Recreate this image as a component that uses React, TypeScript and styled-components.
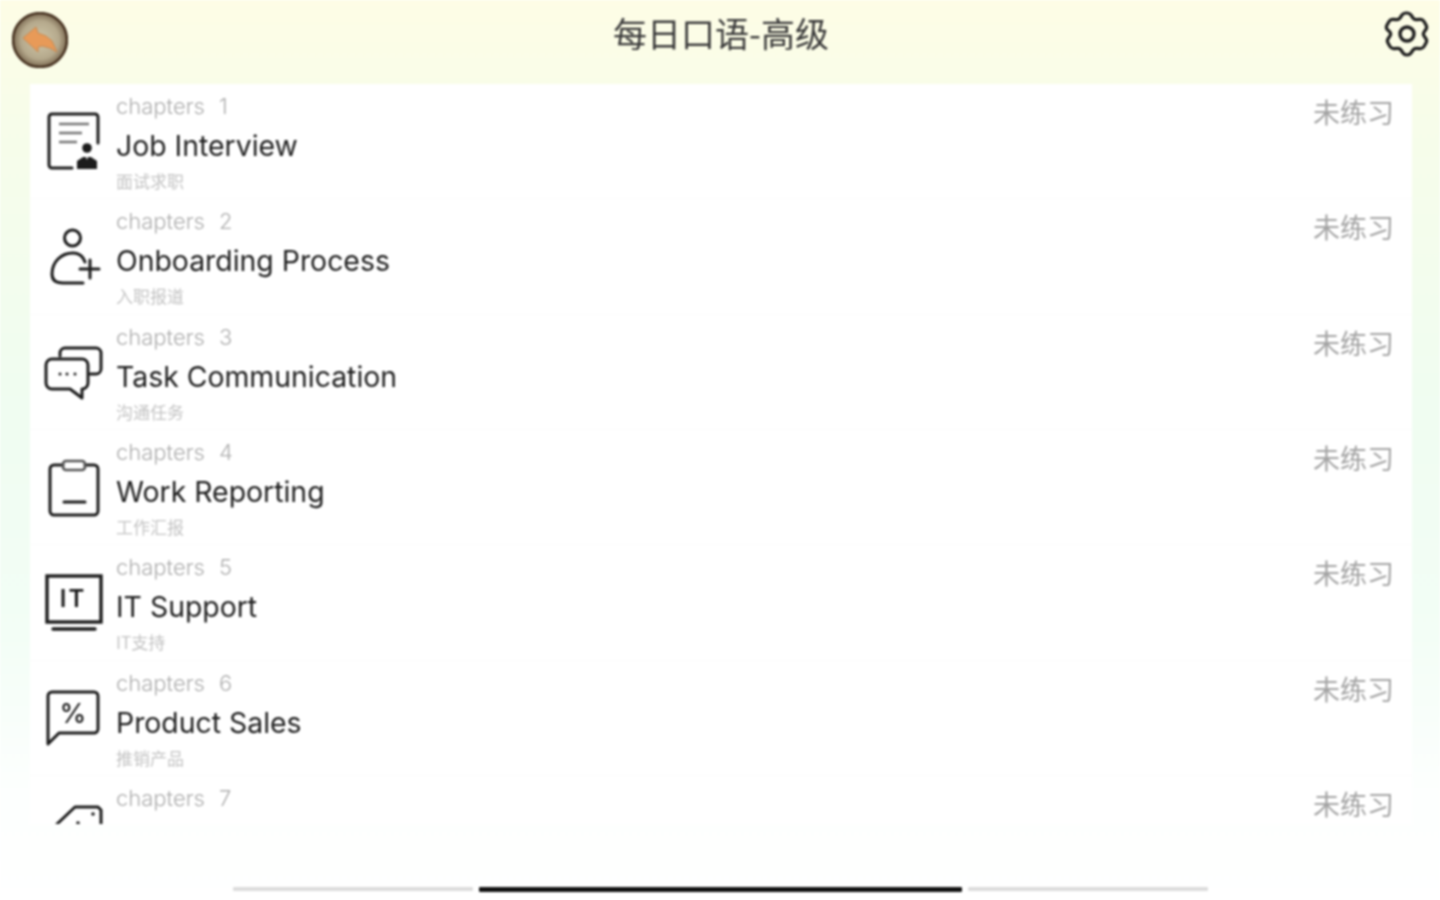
import React from "react";
import styled, { createGlobalStyle } from "styled-components";

const GlobalStyle = createGlobalStyle`
  html, body {
    margin: 0;
    padding: 0;
    height: 100%;
  }
  body {
    font-family: "Inter", "Noto Sans CJK SC", sans-serif;
    background: #fff;
  }
`;

const CJK = `"Noto Sans CJK SC", sans-serif`;

const Page = styled.div`
  width: 1440px;
  height: 900px;
  overflow: hidden;
  display: flex;
  flex-direction: column;
  background: linear-gradient(180deg, #fefde6 0%, #f7fdea 14%, #f0fdf1 45%, #f3fef6 70%, #fdfffe 88%, #ffffff 100%);
  filter: blur(0.8px);
`;

const Header = styled.header`
  height: 84px;
  flex: none;
  display: grid;
  grid-template-columns: 1fr auto 1fr;
  padding: 0 10px 0 12px;
`;

const BackButton = styled.button`
  width: 56px;
  height: 56px;
  margin-top: 12px;
  padding: 0;
  border: none;
  background: none;
  justify-self: start;
`;

const Title = styled.h1`
  margin: 0;
  font: 400 34px/66px ${CJK};
  color: #3a3a3a;
`;

const GearButton = styled.button`
  width: 46px;
  height: 46px;
  margin-top: 11px;
  padding: 0;
  border: none;
  background: none;
  justify-self: end;
`;

const List = styled.main`
  width: 1382px;
  height: 740px;
  flex: none;
  margin-left: 30px;
  overflow: hidden;
  background: #fff;
  display: grid;
  grid-auto-rows: 115.33px;
`;

const Row = styled.section`
  display: flex;
  align-items: flex-start;
  padding: 0 18px 0 14px;
  border-bottom: 1px solid #fcfcfc;
  box-sizing: border-box;
`;

const IconBox = styled.div`
  width: 60px;
  height: 60px;
  margin-top: 28px;
  flex: none;
`;

const Info = styled.div`
  flex: 1;
  margin-left: 12px;
  display: flex;
  flex-direction: column;
`;

const Chapter = styled.div`
  display: flex;
  gap: 14px;
  height: 45px;
  font-size: 22px;
  line-height: 45px;
  font-weight: 300;
  color: #aeaeae;
`;

const Name = styled.div`
  height: 32px;
  margin-top: 1px;
  font-size: 28.4px;
  line-height: 32px;
  color: #1e1e1e;
`;

const Sub = styled.div`
  margin-top: 7px;
  font: 400 17px/24px ${CJK};
  color: #c4c4c4;
`;

const Status = styled.div`
  margin-top: 9px;
  font: 400 27px/38px ${CJK};
  color: #a4a4a4;
`;

const Pager = styled.nav`
  margin-top: 63px;
  display: flex;
  justify-content: center;
  gap: 6px;
`;

const Segment = styled.span<{ $width: number; $active?: boolean }>`
  width: ${(p) => p.$width}px;
  height: ${(p) => (p.$active ? 5 : 4)}px;
  background: ${(p) => (p.$active ? "#111" : "#dcdcdc")};
  border-radius: 1px;
`;

const Line = ({ d, w = 3 }: { d: string; w?: number }) => (
  <path d={d} fill="none" stroke="#1c1c1c" strokeWidth={w} strokeLinecap="round" strokeLinejoin="round" />
);

const icons = [
  <>
    <Line d="M28 56H8a3 3 0 0 1-3-3V5a3 3 0 0 1 3-3h43a3 3 0 0 1 3 3v26" />
    <path d="M15 12h30M15 21h23M15 30h18" fill="none" stroke="#777" strokeWidth="2.4" />
    <circle cx="43" cy="36" r="4.8" fill="#1c1c1c" />
    <path d="M33 57v-8l6-4h3l1 3 1-3h3l6 4v8z" fill="#1c1c1c" />
  </>,
  <>
    <circle cx="28.500" cy="11" r="8" fill="none" stroke="#1c1c1c" strokeWidth="3" />
    <Line d="M41 35c-2-6-6-9-12-9-12 0-21 9-21 21 0 6 4 9 11 9h20" />
    <Line d="M36 42h19M46 33v18" />
  </>,
  <>
    <Line d="M8 16h30a6 6 0 0 1 6 6v18a6 6 0 0 1-6 6v9l-12-9H8a6 6 0 0 1-6-6V22a6 6 0 0 1 6-6z" />
    <Line d="M16 13V10a5 5 0 0 1 5-5h31a5 5 0 0 1 5 5v16a5 5 0 0 1-5 5h-6" />
    <circle cx="16" cy="31" r="1.500" fill="#1c1c1c" />
    <circle cx="23" cy="31" r="1.500" fill="#1c1c1c" />
    <circle cx="31" cy="31" r="1.500" fill="#1c1c1c" />
  </>,
  <>
    <Line d="M19 7H10a4 4 0 0 0-4 4v42a4 4 0 0 0 4 4h40a4 4 0 0 0 4-4V11a4 4 0 0 0-4-4h-9" />
    <rect x="19" y="3" width="22" height="9" rx="3" fill="none" stroke="#555" strokeWidth="2.6" />
    <Line d="M20 44h21" />
  </>,
  <>
    <rect x="3" y="3" width="54" height="46" fill="none" stroke="#1c1c1c" strokeWidth="3.4" />
    <Line d="M9 56h42" w={3.4} />
    <text x="29" y="34" textAnchor="middle" fontFamily="Inter, sans-serif" fontSize="24" fontWeight="600" letterSpacing="2" fill="#1c1c1c">IT</text>
  </>,
  <>
    <Line d="M8 3h42a4 4 0 0 1 4 4v33a4 4 0 0 1-4 4H15L4 55V7a4 4 0 0 1 4-4z" />
    <text x="29" y="34" textAnchor="middle" fontFamily="Inter, sans-serif" fontSize="27" fontWeight="500" fill="#1c1c1c">%</text>
  </>,
  <>
    <Line d="M13 20L31 3h23l3 3v22" />
    <circle cx="34" cy="19" r="1.800" fill="#1c1c1c" />
    <circle cx="49" cy="10" r="1.800" fill="#1c1c1c" />
  </>,
];

// the seventh row is cut off by the list, only its chapter line shows
const chapters: { name?: string; sub?: string }[] = [
  { name: "Job Interview", sub: "面试求职" },
  { name: "Onboarding Process", sub: "入职报道" },
  { name: "Task Communication", sub: "沟通任务" },
  { name: "Work Reporting", sub: "工作汇报" },
  { name: "IT Support", sub: "IT支持" },
  { name: "Product Sales", sub: "推销产品" },
  {},
];

const App = () => {
  return (
    <Page>
      <GlobalStyle />
      <Header>
        <BackButton aria-label="back">
          <svg width="56" height="56" viewBox="0 0 56 56">
            <defs>
              <radialGradient id="backFill">
                <stop offset="0%" stopColor="#cfc6a8" />
                <stop offset="70%" stopColor="#b5a98c" />
                <stop offset="100%" stopColor="#7d6c54" />
              </radialGradient>
            </defs>
            <circle cx="28" cy="28" r="27" fill="url(#backFill)" stroke="#45301f" strokeWidth="2.4" />
            <path d="M11 26L24 15l2 6 8 3 6 5 5 11-7-4-8-2-4 1v5z" fill="#e89a58" stroke="#c98a52" strokeWidth="1" />
          </svg>
        </BackButton>
        <Title>每日口语-高级</Title>
        <GearButton aria-label="settings">
          <svg width="46" height="46" viewBox="0 0 46 46">
            <path
              d="M23 2c2 0 3 .6 4 2l2 3c1 1.400 2 1.800 3.500 1.700l3.500-.3c2-.2 3 .5 4 2.100l2 3.500c1 1.700.9 3-.2 4.500l-1.800 2.600c-.8 1.200-.8 2.600 0 3.800l1.800 2.600c1.100 1.500 1.200 2.800.2 4.500l-2 3.500c-1 1.600-2 2.300-4 2.100l-3.500-.3c-1.500-.1-2.500.3-3.500 1.700l-2 3c-1 1.400-2 2-4 2s-3-.6-4-2l-2-3c-1-1.400-2-1.800-3.500-1.700l-3.500.3c-2 .2-3-.5-4-2.100l-2-3.500c-1-1.700-.9-3 .2-4.500l1.800-2.600c.8-1.200.8-2.600 0-3.800L3.200 18.500C2.100 17 2 15.700 3 14l2-3.500c1-1.600 2-2.300 4-2.100l3.500.3C14 8.800 15 8.400 16 7l2-3c1-1.400 2-2 4-2z"
              fill="none"
              stroke="#1c1c1c"
              strokeWidth="3.200"
            />
            <circle cx="23" cy="23" r="7" fill="none" stroke="#1c1c1c" strokeWidth="3.400" />
          </svg>
        </GearButton>
      </Header>
      <List>
        {chapters.map((c, i) => (
          <Row key={i}>
            <IconBox>
              <svg width="60" height="60" viewBox="0 0 60 60">
                {icons[i]}
              </svg>
            </IconBox>
            <Info>
              <Chapter>
                <span>chapters</span>
                <span>{i + 1}</span>
              </Chapter>
              {c.name && <Name>{c.name}</Name>}
              {c.sub && <Sub>{c.sub}</Sub>}
            </Info>
            <Status>未练习</Status>
          </Row>
        ))}
      </List>
      <Pager>
        <Segment $width={240} />
        <Segment $width={483} $active />
        <Segment $width={240} />
      </Pager>
    </Page>
  );
};

export default App;
